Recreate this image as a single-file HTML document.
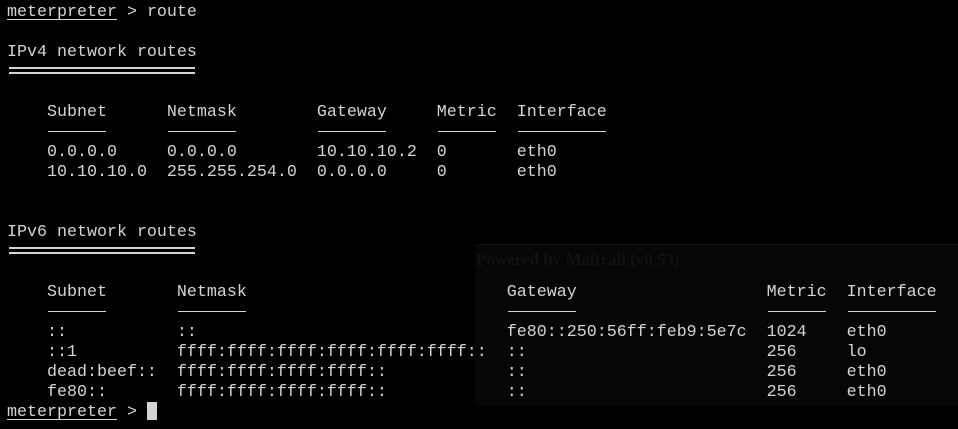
<!DOCTYPE html>
<html><head><meta charset="utf-8"><style>
html,body{margin:0;padding:0;background:#000;width:958px;height:429px;overflow:hidden}
.ov{position:absolute;left:475px;top:244px;width:483px;height:162px;background:#060606}
.ov2{position:absolute;left:475px;top:244px;width:483px;height:1px;background:#101010}
pre{position:absolute;left:7px;top:3px;margin:0;font-family:"Liberation Mono","DejaVu Sans Mono",monospace;font-size:16.67px;line-height:20px;color:#d4d4d4;white-space:pre}
u{text-decoration:underline;text-underline-offset:3px}
.l{display:inline-block;height:20px;vertical-align:top;position:relative}
.l::after{content:"";position:absolute;left:1px;right:1px;top:8px;height:1px;background:#d4d4d4}
.d{display:inline-block;height:20px;vertical-align:top;position:relative}
.d::before,.d::after{content:"";position:absolute;left:2px;right:2px;height:2px;background:#d4d4d4}
.d::before{top:4px}.d::after{top:9px}
.cur{display:inline-block;width:10px;height:18px;background:#d4d4d4;vertical-align:top;margin-top:-1px}
.ghost{position:absolute;left:476px;top:250px;font-family:"Liberation Serif",serif;font-size:17px;color:#121212;font-weight:bold}
</style></head><body>
<div class="ov"></div><div class="ov2"></div>
<div class="ghost">Powered by Maltrail (v0.53)</div>
<pre><u>meterpreter</u> &gt; route

IPv4 network routes
<span class="d" style="width:190px"></span>

    Subnet      Netmask        Gateway     Metric  Interface
    <span class="l" style="width:60px"></span>      <span class="l" style="width:70px"></span>        <span class="l" style="width:70px"></span>     <span class="l" style="width:60px"></span>  <span class="l" style="width:90px"></span>
    0.0.0.0     0.0.0.0        10.10.10.2  0       eth0
    10.10.10.0  255.255.254.0  0.0.0.0     0       eth0


IPv6 network routes
<span class="d" style="width:190px"></span>

    Subnet       Netmask                          Gateway                   Metric  Interface
    <span class="l" style="width:60px"></span>       <span class="l" style="width:70px"></span>                          <span class="l" style="width:70px"></span>                   <span class="l" style="width:60px"></span>  <span class="l" style="width:90px"></span>
    ::           ::                               fe80::250:56ff:feb9:5e7c  1024    eth0
    ::1          ffff:ffff:ffff:ffff:ffff:ffff::  ::                        256     lo
    dead:beef::  ffff:ffff:ffff:ffff::            ::                        256     eth0
    fe80::       ffff:ffff:ffff:ffff::            ::                        256     eth0
<u>meterpreter</u> &gt; <span class="cur"></span></pre>
</body></html>
